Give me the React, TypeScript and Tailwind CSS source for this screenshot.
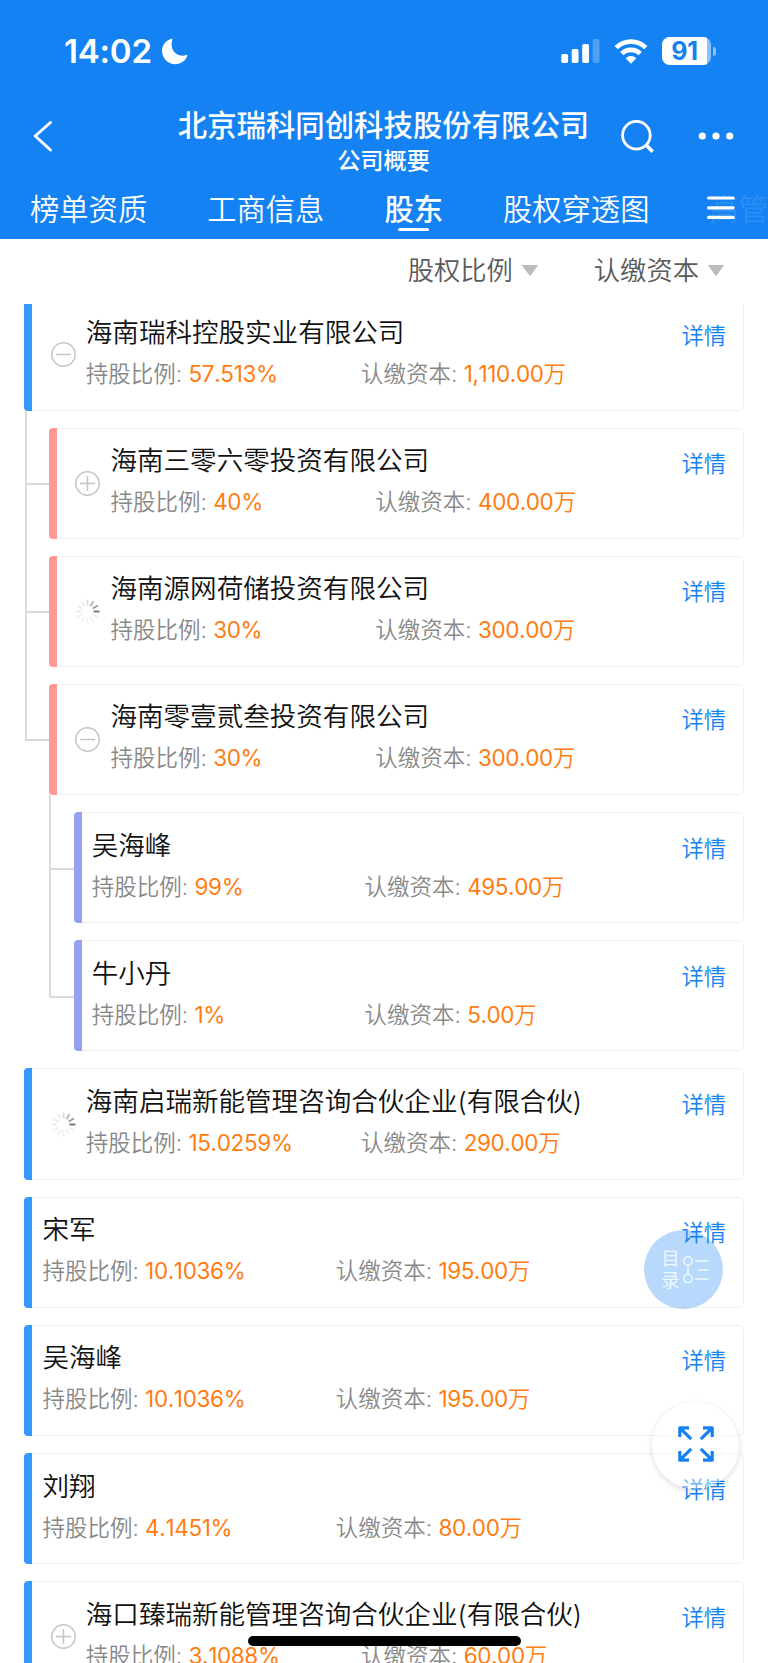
import clsx from "clsx";

type Toggle = "plus" | "minus" | "loading";

type Shareholder = {
  name: string;
  ratio: string;
  capital: string;
  toggle?: Toggle;
  children?: Shareholder[];
};

const shareholders: Shareholder[] = [
  {
    name: "海南瑞科控股实业有限公司",
    ratio: "57.513%",
    capital: "1,110.00",
    toggle: "minus",
    children: [
      { name: "海南三零六零投资有限公司", ratio: "40%", capital: "400.00", toggle: "plus" },
      { name: "海南源网荷储投资有限公司", ratio: "30%", capital: "300.00", toggle: "loading" },
      {
        name: "海南零壹贰叁投资有限公司",
        ratio: "30%",
        capital: "300.00",
        toggle: "minus",
        children: [
          { name: "吴海峰", ratio: "99%", capital: "495.00" },
          { name: "牛小丹", ratio: "1%", capital: "5.00" },
        ],
      },
    ],
  },
  { name: "海南启瑞新能管理咨询合伙企业(有限合伙)", ratio: "15.0259%", capital: "290.00", toggle: "loading" },
  { name: "宋军", ratio: "10.1036%", capital: "195.00" },
  { name: "吴海峰", ratio: "10.1036%", capital: "195.00" },
  { name: "刘翔", ratio: "4.1451%", capital: "80.00" },
  { name: "海口臻瑞新能管理咨询合伙企业(有限合伙)", ratio: "3.1088%", capital: "60.00", toggle: "plus" },
];

const barColors = ["bg-[#3399ff]", "bg-[#ff9898]", "bg-[#93a1f0]"];

// spoke opacity, clockwise from 12 o'clock
const spokes = [0.2, 0.42, 0.6, 0.85, 0.08, 0.08, 0.08, 0.08, 0.09, 0.1, 0.12, 0.12];

function ToggleIcon({ type }: { type: Toggle }) {
  if (type === "loading") {
    return (
      <svg className="size-[25px]" viewBox="0 0 25 25">
        {spokes.map((opacity, i) => (
          <path
            key={i}
            d="M12.5 .5v6"
            stroke="#555"
            strokeWidth="1.8"
            opacity={opacity}
            transform={`rotate(${i * 30} 12.5 12.5)`}
          />
        ))}
      </svg>
    );
  }
  return (
    <svg className="size-[25px]" viewBox="0 0 25 25" fill="none" stroke="#c4c4c4" strokeWidth="1.5">
      <circle cx="12.5" cy="12.5" r="11.7" />
      <path d={type === "plus" ? "M5 12.5h15M12.5 5v15" : "M5 12.5h15"} />
    </svg>
  );
}

function Card({ item, level }: { item: Shareholder; level: number }) {
  return (
    <div className="relative flex h-[111.2px] rounded-[5px] border border-[#f0f0f0]">
      <div className={clsx("-my-px -ml-px w-2 shrink-0 rounded-l-[4px]", barColors[level])} />
      {item.toggle && (
        <div className="ml-[18.4px] flex w-[25px] shrink-0 items-center">
          <ToggleIcon type={item.toggle} />
        </div>
      )}
      <div className="ml-[10px] min-w-0 flex-1 whitespace-nowrap pt-[11.5px]">
        <div className="h-10 text-[26.55px] leading-10 text-[#111]">{item.name}</div>
        <div className="flex h-10 text-[22.5px] leading-[43px] text-[#888]">
          <div className="w-[41.9%] shrink-0">
            持股比例:{" "}
            <span className="font-normal tracking-[-0.35px] text-[#ff7d10] [font-kerning:none]">{item.ratio}</span>
          </div>
          <div>
            认缴资本:{" "}
            <span className="text-[#ff7d10]">
              <span className="font-normal tracking-[-0.4px] [font-kerning:none]">{item.capital}</span>万
            </span>
          </div>
        </div>
      </div>
      <a className="absolute right-[16.5px] top-[19.5px] text-[22.3px] leading-8 text-[#1482f2]">详情</a>
    </div>
  );
}

function Node({ item, level }: { item: Shareholder; level: number }) {
  return (
    <div className="flex flex-col gap-[17px]">
      <Card item={item} level={level} />
      {item.children && (
        <div className="ml-[24.7px] flex flex-col">
          {item.children.map((child, i) => {
            const last = i === item.children!.length - 1;
            return (
              <div key={i} className={clsx("relative", !last && "pb-[17px]")}>
                <span
                  className={clsx(
                    "absolute -left-[24.5px] -top-[17px] w-[2px] bg-[#dadada]",
                    last ? "h-[74px]" : "bottom-0"
                  )}
                />
                <span className="absolute -left-[24px] top-[55.5px] h-[2px] w-6 bg-[#dadada]" />
                <Node item={child} level={level + 1} />
              </div>
            );
          })}
        </div>
      )}
    </div>
  );
}

function StatusBar() {
  return (
    <div className="flex h-[102px] items-center justify-between pl-[64px] pr-[52px]">
      <div className="flex items-center gap-[9px]">
        <span className="text-[33px] font-semibold leading-none tracking-[-0.2px]">14:02</span>
        <svg className="size-[27px]" viewBox="0 0 27 27" fill="white">
          <path d="M10.6.8C4.8 2.3 1 7 1 12.8 1 20.3 7 26.2 14.2 26.2c5.6 0 10.3-3.3 12.1-8.4.2-.7-.3-1-1-.8C16.6 20.1 8 12.6 11.3 1.8c.3-.8-.1-1.1-.7-1z" />
        </svg>
      </div>
      <div className="flex items-center">
        <svg className="h-6 w-[39px]" viewBox="0 0 39 24" fill="white">
          <rect x=".3" y="15" width="6.8" height="9" rx="1.7" />
          <rect x="10.7" y="10" width="6.8" height="14" rx="1.7" />
          <rect x="21.2" y="5" width="6.8" height="19" rx="1.7" />
          <rect x="31.7" y="0" width="6.8" height="24" rx="1.7" opacity=".25" />
        </svg>
        <svg className="ml-[14px] h-[25px] w-[34px]" viewBox="0 0 34 25" fill="none" stroke="white" strokeWidth="4.6">
          <path d="M2.2 8.7a21 21 0 0 1 29.6 0" />
          <path d="M7.8 14.7a13 13 0 0 1 18.4 0" />
          <path d="M11.7 19.3a7.5 7.5 0 0 1 10.6 0L17 24.7z" fill="white" stroke="none" />
        </svg>
        <div className="ml-[14px] flex h-[28px] w-[49px] overflow-hidden rounded-[8px] bg-white/50">
          <span className="w-[45px] bg-white text-center text-[25px] font-bold leading-[28px] tracking-[-0.2px] text-[#1482f2]">
            91
          </span>
        </div>
        <div className="ml-[2px] h-[9px] w-[3px] rounded-r-full bg-white/50" />
      </div>
    </div>
  );
}

function Filter({ label }: { label: string }) {
  return (
    <div className="flex items-center text-[26.3px] text-[#5a5a5a]">
      {label}
      <svg className="ml-[9px] h-[11px] w-4" viewBox="0 0 16 11">
        <path d="M.5.5h15L8 10.5z" fill="#bbb" stroke="#bbb" strokeLinejoin="round" />
      </svg>
    </div>
  );
}

export default function App() {
  return (
    <div className="relative flex h-[1663px] w-[768px] flex-col overflow-hidden bg-white font-[350] [font-family:Inter,'Noto_Sans_CJK_SC',sans-serif]">
      <header className="h-[238.5px] shrink-0 bg-[#1482f2] text-white">
        <StatusBar />
        <div className="flex h-[73px] items-center">
          <svg
            className="mb-[5px] ml-[33px] h-8 w-5"
            viewBox="0 0 20 32"
            fill="none"
            stroke="white"
            strokeWidth="3"
            strokeLinecap="round"
            strokeLinejoin="round"
          >
            <path d="M17.5 2.5 2.2 16l15.3 14" />
          </svg>
          <div className="mx-auto flex flex-col items-center pl-[94px] pt-[6px]">
            <h1 className="text-[29.4px] font-medium leading-[38px]">北京瑞科同创科技股份有限公司</h1>
            <p className="text-[23.2px] font-medium leading-8">公司概要</p>
          </div>
          <svg
            className="mb-[4px] mr-[44px] size-[34px]"
            viewBox="0 0 34 34"
            fill="none"
            stroke="white"
            strokeWidth="2.8"
          >
            <circle cx="16.4" cy="15.2" r="13.8" />
            <path d="M25.7 24.5l7 7.3" strokeWidth="3.5" />
          </svg>
          <svg className="mb-[6px] mr-[34px] h-2 w-9" viewBox="0 0 36 8" fill="white">
            <circle cx="4.3" cy="4" r="3.6" />
            <circle cx="18" cy="4" r="3.6" />
            <circle cx="31.7" cy="4" r="3.6" />
          </svg>
        </div>
        <nav className="relative flex h-[63px] whitespace-nowrap pl-[30px] text-[29.3px] leading-[69px]">
          <span className="mr-[60px]">榜单资质</span>
          <span className="mr-[60px]">工商信息</span>
          <span className="relative mr-[60px] font-medium">
            股东
            <i className="absolute left-[13.5px] top-[52.5px] h-[3.5px] w-[31px] rounded-full bg-white" />
          </span>
          <span className="mr-[60px]">股权穿透图</span>
          <span className="opacity-10">高管</span>
          <svg
            className="absolute left-[707px] top-[20px] h-6 w-7"
            viewBox="0 0 28 24"
            stroke="white"
            strokeWidth="3.2"
            strokeLinecap="round"
          >
            <path d="M1.6 3h24.6M1.6 12.8h24.6M1.6 22.4h24.6" />
          </svg>
        </nav>
      </header>

      <div className="flex h-[65.5px] shrink-0 items-center justify-end gap-[56px] pb-[1px] pr-[44px]">
        <Filter label="股权比例" />
        <Filter label="认缴资本" />
      </div>

      <main className="min-h-0 flex-1 overflow-hidden px-[24.4px]">
        <div className="-mt-[4.7px] flex flex-col gap-[17px]">
          {shareholders.map((item, i) => (
            <Node key={i} item={item} level={0} />
          ))}
        </div>
      </main>

      <button className="absolute left-[644px] top-[1230px] flex size-[79px] items-center justify-center gap-[3px] rounded-full bg-[#1482f2]/30 pl-[3px] text-[18px] font-normal leading-[22px] text-white/80">
        <span className="w-[18px]">目录</span>
        <svg className="h-[28px] w-[26px]" viewBox="0 0 26 28" fill="none" stroke="currentColor" strokeWidth="1.5">
          <circle cx="5" cy="5" r="4.2" />
          <circle cx="5" cy="22.5" r="4.2" />
          <path d="M5 9.2v9M12 5h13.5M15 14h10.5M12 23h13.5" />
        </svg>
      </button>

      <button className="absolute left-[652px] top-[1402px] flex size-[87px] items-center justify-center rounded-full bg-white/40 pb-[4px] shadow-[0_2px_6px_rgba(0,0,0,0.14)]">
        <svg className="size-9" viewBox="0 0 36 36" fill="none" stroke="#1482f2" strokeWidth="3.2" strokeLinejoin="round">
          <path d="M11 1.8H1.8V11M1.8 1.8l11.4 11.4M25 1.8h9.2V11M34.2 1.8 22.8 13.2M1.8 25v9.2H11M1.8 34.2l11.4-11.4M34.2 25v9.2H25M34.2 34.2 22.8 22.8" />
        </svg>
      </button>

      <div className="absolute left-[248px] top-[1636px] h-[10px] w-[273px] rounded-full bg-black" />
    </div>
  );
}
